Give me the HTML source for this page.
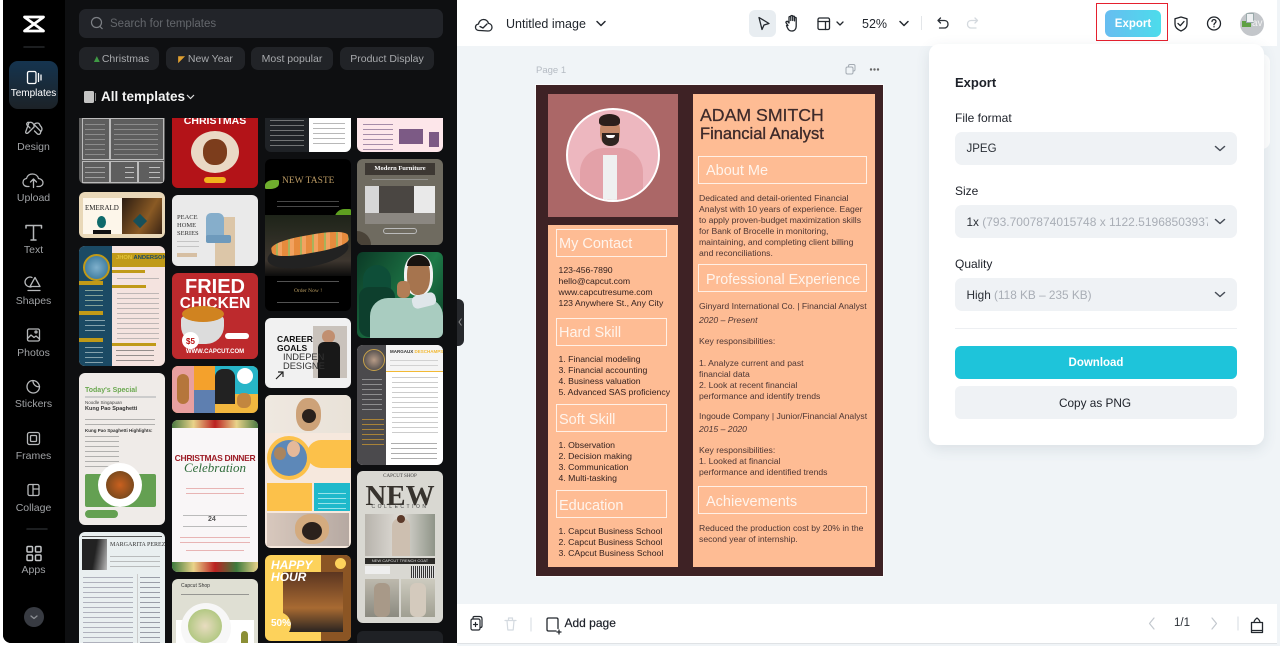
<!DOCTYPE html>
<html><head><meta charset="utf-8"><style>
html,body{margin:0;padding:0;width:1280px;height:646px;overflow:hidden;background:#fff;font-family:"Liberation Sans",sans-serif}
div,span,svg{position:absolute;display:block}
.t{white-space:nowrap;line-height:14px}
span.i{position:static;display:inline}
.nav{left:2.500px;width:62px;text-align:center;color:#a0a2a5;font-size:10.5px;line-height:12px}
.chip{top:47px;height:23px;background:#212327;border-radius:7px;color:#a8aaad;font-size:10.5px;line-height:24px;text-align:center;white-space:nowrap}
.c{overflow:hidden;border-radius:6px}
.l{opacity:.6;background:repeating-linear-gradient(#0000 0 2px,var(--k,#999) 2px 3px,#0000 3px 5px)}
.r9{font-size:8.700px;line-height:11px;color:#33211f;white-space:nowrap}
.b9{font-size:8.650px;line-height:11px;color:#4d3634;white-space:nowrap}
.box{border:1.300px solid #fff0e6;box-sizing:border-box;height:28px}
.h{color:#fff4ec;font-size:14.5px;line-height:16px;white-space:nowrap}
.lab{left:955px;font-size:12px;line-height:14px;color:#1d2129;white-space:nowrap}
.dd{left:955px;width:282px;height:33px;background:#eff2f5;border-radius:7px;font-size:11.800px;line-height:33px;color:#2a2f36;overflow:hidden}
.g{color:#a9aeb6}
.cap{color:#fff;font-weight:bold;white-space:nowrap;text-align:center}
</style></head><body>

<!-- canvas background -->
<div style="left:457px;top:0;width:823px;height:646px;background:#f0f4f7"></div>
<div style="left:457px;top:0;width:820px;height:46px;background:#fff"></div>
<div style="left:457px;top:604px;width:820px;height:39px;background:#fff;border-bottom:1px solid #dfe2e5"></div>

<!-- sidebar + panel -->
<div style="left:3px;top:0;width:454px;height:643px;background:#0e0f11;border-radius:0 0 0 8px;overflow:hidden"></div>
<div style="left:3px;top:0;width:62px;height:643px;background:#000;border-radius:0 0 0 8px"></div>

<svg style="left:0;top:0" width="68" height="640" fill="none" stroke="#b6b8ba" stroke-width="1.3" stroke-linecap="round" stroke-linejoin="round">
<path d="M24.5 17H43.5M25 17.5L43 30.5M43 17.5L25 30.5M24.5 31H43.500" stroke="#fff" stroke-width="2.7"/>
<path d="M24 47H44M27 529H47" stroke="#26282b" stroke-width="1.5"/>
</svg>

<div style="left:9px;top:61px;width:49px;height:48px;border-radius:9px;background:linear-gradient(#15344f,#1c2227)"></div>
<svg style="left:0;top:0" width="68" height="640" fill="none" stroke="#b6b8ba" stroke-width="1.3" stroke-linecap="round" stroke-linejoin="round">
<rect x="27.500" y="71.500" width="8.500" height="12" rx="1.500" stroke="#fff"/><path d="M38.500 73.500V81.500M41 75V80" stroke="#fff"/>
<!-- design -->
<path d="M29 122.500c3-1 5.500 1.500 5 4.500l-5.500 5.500c-1.800 1.800-3.500.5-2.500-1.500zM39 123.500c-2 -1-3.500-.5-5 1l7 7c1.500-2 1-4-.5-5.500zM30 128l-3-3c-1-2 1-3 2-2.500M34.500 131l3 3c2 1 3.500-.5 3-2.500"/>
<!-- upload -->
<path d="M29 186.500h-1.500c-3 0-4.500-2-4.500-4 0-2.300 1.500-3.800 3.500-4 .8-3 3-4.500 6-4.500s5.300 1.800 6 4.500c2.500.2 4.500 2 4.500 4.200 0 2-1.500 3.800-4 3.800H37M33.500 187.500V179.500M30.500 182l3-3 3 3"/>
<!-- text -->
<path d="M26 228v-2.500H41.500V228M33.500 225.500V240M31 240h5" stroke-width="1.500"/>
<!-- shapes -->
<path d="M31 287c-4 0-6-2.500-6-5s2.500-5 5-5c.8 0 1.500.2 2 .5M35 277.500l5 9h-10zM28 290.500h12" />
<!-- photos -->
<rect x="27.500" y="329" width="12" height="12" rx="1.500"/><path d="M27.500 338.500l3.500-3.500 3 2.500 2-1.500 3.500 3"/><circle cx="36" cy="332" r="1"/>
<!-- stickers -->
<path d="M33 380.500c-3.500 0-6 2.800-6 6.200s2.800 6.300 6.300 6.300 6.200-2.800 6.200-6.300c-3.500.5-6.800-2.500-6.500-6.200zM33 380.500c3 0 6 2.500 6.500 6"/>
<!-- frames -->
<rect x="27.500" y="432.500" width="12" height="12" rx="2"/><rect x="30.500" y="435.500" width="6" height="6" rx="1"/>
<!-- collage -->
<rect x="28" y="484.500" width="11" height="11" rx="1.500"/><path d="M33 484.500v11M33 489h6"/>
<!-- apps -->
<g stroke="#c4c6c8" stroke-width="1.500"><rect x="27" y="546.500" width="5.500" height="5.500" rx="1"/><rect x="35.500" y="546.500" width="5.500" height="5.500" rx="1"/><rect x="27" y="555" width="5.500" height="5.500" rx="1"/><rect x="35.500" y="555" width="5.500" height="5.500" rx="1"/></g>
<circle cx="34" cy="617" r="10" fill="#383b42" stroke="none"/><path d="M31 616l3 2.500 3-2.500" stroke="#8d9095"/>
</svg>

<div class="nav" style="top:88px;color:#fff;font-size:10px">Templates</div>
<div class="nav" style="top:141px">Design</div>
<div class="nav" style="top:192px">Upload</div>
<div class="nav" style="top:244px">Text</div>
<div class="nav" style="top:295px">Shapes</div>
<div class="nav" style="top:347px">Photos</div>
<div class="nav" style="top:398px">Stickers</div>
<div class="nav" style="top:450px">Frames</div>
<div class="nav" style="top:502px">Collage</div>
<div class="nav" style="top:564px">Apps</div>

<!-- search -->
<div style="left:79px;top:9px;width:364px;height:29px;background:#222429;border-radius:7px"></div>
<svg style="left:90px;top:15px" width="16" height="16" fill="none" stroke="#7d8085" stroke-width="1.200"><circle cx="6.500" cy="7.500" r="5"/><path d="M10 11.500l2.500 2.500"/></svg>
<div class="t" style="left:110px;top:17px;font-size:11.5px;color:#64676c">Search for templates</div>
<div class="chip" style="left:79px;width:80px;padding-left:3px;box-sizing:border-box"><span class="i" style="color:#3f9a44;font-size:10px">▲</span>Christmas</div>
<div class="chip" style="left:166px;width:79px;box-sizing:border-box"><span class="i" style="color:#e0a030;font-size:9px">◤</span> New Year</div>
<div class="chip" style="left:251px;width:82px">Most popular</div>
<div class="chip" style="left:340px;width:94px">Product Display</div>
<div style="left:84px;top:91px;width:10px;height:12px;background:#c4c4c4;border-radius:1.500px"></div>
<div style="left:94.500px;top:93px;width:1.500px;height:8px;background:#888"></div>
<div class="t" style="left:101px;top:89px;font-size:13.500px;line-height:16px;font-weight:bold;color:#f4f4f4">All templates</div>
<svg style="left:186px;top:93px" width="10" height="8" fill="none" stroke="#ddd" stroke-width="1.200"><path d="M1 2l3.500 3.500L8 2"/></svg>

<!-- template grid -->
<div style="left:79px;top:118px;width:366px;height:525px;overflow:hidden">
<!-- col1 -->
<div class="c" style="left:0;top:-8px;width:86px;height:74px;background:#5e5e5e">
  <div style="left:3px;top:8px;width:26px;height:40px;border:1px solid #bbb"></div><div style="left:31px;top:8px;width:52px;height:40px;border:1px solid #bbb"></div>
  <div class="l" style="left:6px;top:12px;width:20px;height:33px;--k:#aaa"></div><div class="l" style="left:35px;top:12px;width:44px;height:33px;--k:#aaa"></div>
  <div style="left:3px;top:51px;width:26px;height:20px;border:1px solid #bbb"></div><div style="left:31px;top:51px;width:26px;height:20px;border:1px solid #bbb"></div><div style="left:59px;top:51px;width:24px;height:20px;border:1px solid #bbb"></div>
  <div class="l" style="left:6px;top:55px;width:20px;height:14px;--k:#ccc"></div><div class="l" style="left:46px;top:55px;width:9px;height:14px;--k:#fff"></div><div class="l" style="left:70px;top:55px;width:11px;height:14px;--k:#fff"></div>
</div>
<div class="c" style="left:0;top:74px;width:86px;height:46px;background:#e9d8b8">
  <div style="left:4px;top:6px;width:40px;height:36px;background:#fdf6ea"></div>
  <div style="left:43px;top:6px;width:40px;height:36px;background:linear-gradient(120deg,#2b1c12,#8a5a24 60%,#3a2414)"></div>
  <div class="t" style="left:6px;top:12px;font-family:'Liberation Serif',serif;font-size:7px;line-height:9px;color:#222">EMERALD</div>
  <div style="left:18px;top:24px;width:9px;height:12px;border-radius:50%;background:#0f6a6b"></div>
  <div style="left:14px;top:38px;width:18px;height:4px;background:#111"></div>
  <div style="left:56px;top:24px;width:10px;height:10px;background:#16505a;transform:rotate(45deg)"></div>
</div>
<div class="c" style="left:0;top:128px;width:86px;height:120px;background:#f4e3df">
  <div style="left:0;top:0;width:33px;height:120px;background:#1b4a64"></div>
  <div style="left:33px;top:7px;width:53px;height:14px;background:#c09a18"></div>
  <div class="t" style="left:37px;top:8px;font-size:5.800px;line-height:9px;font-weight:bold;color:#1b4a64"><span class="i" style="color:#e3c43a">JHON</span> ANDERSON</div>
  <div style="left:4px;top:8px;width:23px;height:23px;border-radius:50%;border:2px solid #c09a18;background:radial-gradient(#7fb0cc,#2b6d92)"></div>
  <div style="left:0;top:35px;width:24px;height:4px;background:#c09a18"></div><div style="left:33px;top:24px;width:33px;height:3px;background:#c09a18"></div><div style="left:33px;top:39px;width:34px;height:3px;background:#c09a18"></div>
  <div style="left:0;top:65px;width:24px;height:4px;background:#c09a18"></div><div style="left:0;top:92px;width:24px;height:4px;background:#c09a18"></div><div style="left:33px;top:97px;width:44px;height:3px;background:#c09a18"></div>
  <div class="l" style="left:38px;top:30px;width:42px;height:7px;--k:#999"></div><div class="l" style="left:38px;top:45px;width:42px;height:50px;--k:#999"></div><div class="l" style="left:37px;top:102px;width:38px;height:14px;--k:#555"></div>
  <div class="l" style="left:6px;top:42px;width:18px;height:18px;--k:#cdb"></div><div class="l" style="left:6px;top:72px;width:20px;height:16px;--k:#cdd"></div><div class="l" style="left:6px;top:99px;width:18px;height:18px;--k:#cdd"></div>
</div>
<div class="c" style="left:0;top:255px;width:86px;height:152px;background:#efebe8">
  <div class="t" style="left:6px;top:13px;font-size:7px;line-height:10px;font-weight:bold;color:#6aa84f">Today's Special</div>
  <div style="left:6px;top:23px;width:71px;height:2px;background:#ccc"></div>
  <div class="t" style="left:6px;top:27px;font-size:4.500px;line-height:6px;color:#444">Noodle Singapuan</div>
  <div class="t" style="left:6px;top:33px;font-size:5.500px;line-height:7px;font-weight:bold;color:#333">Kung Pao Spaghetti</div>
  <div class="l" style="left:6px;top:44px;width:70px;height:10px;--k:#888"></div>
  <div class="t" style="left:6px;top:55px;font-size:4.500px;line-height:6px;font-weight:bold;color:#333">Kung Pao Spaghetti Highlights:</div>
  <div class="l" style="left:6px;top:61px;width:34px;height:33px;--k:#888"></div>
  <div style="left:6px;top:101px;width:71px;height:33px;background:#64a052;border-radius:2px"></div>
  <div style="left:19px;top:90px;width:44px;height:44px;border-radius:50%;background:#fff"></div>
  <div style="left:27px;top:98px;width:28px;height:28px;border-radius:50%;background:radial-gradient(#c9601f,#7d4a1d 70%,#5d7a22)"></div>
  <div style="left:6px;top:137px;width:33px;height:8px;border-radius:4px;background:#64a052"></div>
</div>
<div class="c" style="left:0;top:414px;width:86px;height:120px;background:#e9eff0">
  <div style="left:3px;top:4px;width:80px;height:1px;background:#555"></div>
  <div style="left:3px;top:7px;width:25px;height:31px;background:linear-gradient(100deg,#222 50%,#bbb)"></div>
  <div class="t" style="left:31px;top:9px;font-family:'Liberation Serif',serif;font-size:6px;line-height:8px;color:#333">MARGARITA PEREZ</div>
  <div class="l" style="left:31px;top:22px;width:50px;height:14px;--k:#999"></div>
  <div style="left:58px;top:42px;width:1px;height:70px;background:#ccc"></div>
  <div class="l" style="left:4px;top:43px;width:50px;height:70px;--k:#889"></div><div class="l" style="left:61px;top:43px;width:20px;height:70px;--k:#667"></div>
</div>
<!-- col2 -->
<div class="c" style="left:93px;top:-12px;width:86px;height:82px;background:#b31318">
  <div class="cap" style="left:0;top:9px;width:86px;font-size:10.500px;line-height:12px">CHRISTMAS</div>
  <div style="left:19px;top:25px;width:48px;height:42px;border-radius:50%;background:#ead9c5"></div>
  <div style="left:31px;top:33px;width:24px;height:26px;border-radius:45%;background:#7c3d1c"></div>
  <div style="left:32px;top:71px;width:22px;height:6px;border-radius:3px;background:#f2b21c"></div>
</div>
<div class="c" style="left:93px;top:77px;width:86px;height:71px;background:#eaeaea">
  <div class="t" style="left:5px;top:19px;font-family:'Liberation Serif',serif;font-size:6.500px;line-height:8px;color:#333">PEACE<br>HOME<br>SERIES</div>
  <div style="left:43px;top:22px;width:20px;height:49px;background:#dcc6a8"></div>
  <div style="left:34px;top:18px;width:18px;height:29px;border-radius:5px 6px 2px 2px;background:#86aecb"></div>
  <div style="left:34px;top:40px;width:25px;height:8px;background:#6e9abc;border-radius:2px"></div>
  <div class="l" style="left:5px;top:44px;width:22px;height:10px;--k:#aaa"></div><div style="left:5px;top:58px;width:20px;height:4px;background:#d6bfa3"></div>
</div>
<div class="c" style="left:93px;top:155px;width:86px;height:86px;background:#bd2a2d">
  <div class="cap" style="left:0;top:4px;width:86px;font-size:20px;line-height:21px">FRIED</div>
  <div class="cap" style="left:0;top:22px;width:86px;font-size:15.500px;line-height:17px">CHICKEN</div>
  <div style="left:9px;top:43px;width:43px;height:28px;border-radius:4px 4px 18px 18px;background:#dcdcdc"></div>
  <div style="left:10px;top:33px;width:42px;height:16px;border-radius:50%;background:#d08320"></div>
  <div style="left:10px;top:59px;width:17px;height:17px;border-radius:50%;background:#fff;color:#b11;font-size:8px;font-weight:bold;line-height:19px;text-align:center">$5</div>
  <div style="left:53px;top:60px;width:24px;height:6px;border-radius:3px;background:#fff"></div>
  <div class="cap" style="left:0;top:75px;width:86px;font-size:6px;line-height:8px">WWW.CAPCUT.COM</div>
</div>
<div class="c" style="left:93px;top:248px;width:86px;height:47px;background:#f2b73f">
  <div style="left:0;top:0;width:22px;height:47px;background:#e8a0a0"></div>
  <div style="left:22px;top:0;width:21px;height:24px;background:#f4a12c"></div>
  <div style="left:43px;top:0;width:43px;height:28px;background:#27b5c8"></div>
  <div style="left:43px;top:3px;width:20px;height:35px;background:#222;border-radius:8px 8px 0 0"></div>
  <div style="left:22px;top:24px;width:21px;height:23px;background:#5e7fb0"></div>
  <div style="left:5px;top:8px;width:12px;height:30px;background:#b5763c;border-radius:6px"></div>
  <div style="left:65px;top:27px;width:14px;height:15px;background:#c2863f;border-radius:6px"></div>
  <div style="left:65px;top:2px;width:16px;height:16px;border-radius:50%;background:#fff"></div>
</div>
<div class="c" style="left:93px;top:302px;width:86px;height:152px;background:#f9f6f7">
  <div style="left:0;top:0;width:86px;height:8px;background:linear-gradient(90deg,#4c7a42,#e9d38a,#b22,#e9d38a,#4c7a42)"></div>
  <div class="t" style="left:0;top:33px;width:86px;text-align:center;font-size:8.500px;line-height:10px;font-weight:bold;color:#9d1c26;letter-spacing:-.3px">CHRISTMAS DINNER</div>
  <div class="t" style="left:0;top:41px;width:86px;text-align:center;font-family:'Liberation Serif',serif;font-style:italic;font-size:13px;line-height:14px;color:#2f6b3a">Celebration</div>
  <div class="l" style="left:14px;top:66px;width:58px;height:11px;--k:#d88"></div>
  <div style="left:11px;top:95px;width:64px;height:10px;border-top:1px solid #bbb;border-bottom:1px solid #bbb"></div>
  <div class="t" style="left:36px;top:95px;font-size:7px;line-height:10px;font-weight:bold;color:#555">24</div>
  <div class="l" style="left:8px;top:115px;width:70px;height:8px;--k:#d88"></div><div class="l" style="left:14px;top:128px;width:58px;height:4px;--k:#d88"></div>
  <div style="left:0;top:142px;width:86px;height:10px;background:linear-gradient(90deg,#3d7a3d,#e9d38a,#b22,#3d7a3d,#e9d38a)"></div>
</div>
<div class="c" style="left:93px;top:461px;width:86px;height:70px;background:#dfdfd3">
  <div class="t" style="left:9px;top:4px;font-size:5px;line-height:7px;color:#333">Capcut Shop</div>
  <div style="left:9px;top:13px;width:68px;height:5px;--k:#666" class="l"></div>
  <div style="left:4px;top:41px;width:78px;height:30px;background:#fff"></div>
  <div style="left:9px;top:24px;width:50px;height:50px;border-radius:50%;background:#f7f7f7"></div>
  <div style="left:16px;top:30px;width:34px;height:34px;border-radius:50%;background:radial-gradient(#e8dcc0,#9dc06a)"></div>
  <div style="left:69px;top:52px;width:7px;height:20px;border-radius:4px;background:#8b8f35"></div>
</div>
<!-- col3 -->
<div class="c" style="left:186px;top:-10px;width:86px;height:44px;background:#1f2226">
  <div style="left:44px;top:0;width:42px;height:44px;background:#fff"></div>
  <div class="l" style="left:5px;top:10px;width:34px;height:30px;--k:#aaa"></div><div class="l" style="left:48px;top:13px;width:32px;height:24px;--k:#888"></div>
</div>
<div class="c" style="left:186px;top:41px;width:86px;height:152px;background:#000">
  <div class="t" style="left:17px;top:17px;font-family:'Liberation Serif',serif;font-size:9.500px;line-height:11px;color:#bb9a63">NEW TASTE</div>
  <div class="l" style="left:12px;top:40px;width:62px;height:10px;--k:#777"></div>
  <div style="left:0;top:21px;width:14px;height:9px;border-radius:60% 10%;background:#6fae2e"></div>
  <div style="left:70px;top:50px;width:16px;height:14px;border-radius:60% 10%;background:#5ea020"></div>
  <div style="left:0;top:56px;width:86px;height:61px;background:linear-gradient(#1e2419,#3d362f 75%,#0c0c0c)"></div>
  <div style="left:2px;top:80px;width:82px;height:28px;border-radius:50%;background:#222;transform:rotate(-10deg)"></div>
  <div style="left:6px;top:76px;width:78px;height:18px;border-radius:40%;background:repeating-linear-gradient(100deg,#e68b3d 0 6px,#a8b35b 6px 8px,#f2a260 8px 12px);transform:rotate(-10deg)"></div>
  <div class="l" style="left:12px;top:120px;width:62px;height:6px;--k:#888"></div>
  <div class="t" style="left:0;width:86px;text-align:center;top:129px;font-family:'Liberation Serif',serif;font-size:5.500px;line-height:7px;color:#b89b60">Order Now !</div>
  <div class="l" style="left:12px;top:141px;width:62px;height:4px;--k:#888"></div>
</div>
<div class="c" style="left:186px;top:200px;width:86px;height:70px;background:#f1f1f1">
  <div style="left:48px;top:8px;width:34px;height:52px;background:#c9c2bb"></div>
  <div style="left:57px;top:12px;width:13px;height:13px;border-radius:50%;background:#c18f70"></div>
  <div style="left:53px;top:24px;width:22px;height:36px;background:#181818;border-radius:6px 6px 0 0"></div>
  <div class="t" style="left:12px;top:17px;font-size:8.500px;line-height:9px;font-weight:bold;color:#111">CAREER<br>GOALS</div>
  <div class="t" style="left:18px;top:35px;font-size:9.300px;line-height:9px;color:#333">INDEPEN<br>DESIGNE</div>
  <svg style="left:10px;top:52px" width="10" height="10" fill="none" stroke="#222" stroke-width="1.200"><path d="M1 9L8 2M3 2h5v5"/></svg>
</div>
<div class="c" style="left:186px;top:277px;width:86px;height:153px;background:#f6e8dd">
  <div style="left:0;top:0;width:86px;height:38px;background:linear-gradient(90deg,#efe8e0,#e9e2d8)"></div>
  <div style="left:31px;top:3px;width:25px;height:33px;border-radius:45%;background:#cda278"></div><div style="left:37px;top:14px;width:14px;height:14px;border-radius:50%;background:#2a211c"></div>
  <div style="left:2px;top:41px;width:44px;height:44px;border-radius:50%;background:#fcc14a"></div>
  <div style="left:6px;top:45px;width:36px;height:36px;border-radius:50%;background:#5d88b8"></div>
  <div style="left:22px;top:46px;width:13px;height:16px;border-radius:50%;background:#e5b99a"></div>
  <div style="left:9px;top:52px;width:12px;height:13px;border-radius:50%;background:#aa855f"></div>
  <div style="left:42px;top:45px;width:44px;height:28px;border-radius:14px 0 0 14px;background:#fcc14a"></div>
  <div style="left:2px;top:88px;width:45px;height:28px;background:#fcc14a"></div>
  <div style="left:49px;top:88px;width:36px;height:28px;background:#1fb9cb"></div>
  <div class="l" style="left:53px;top:96px;width:28px;height:18px;--k:#e8ffff"></div>
  <div style="left:2px;top:118px;width:82px;height:33px;background:linear-gradient(90deg,#d8c8bd,#b6a9a2)"></div>
  <div style="left:30px;top:119px;width:34px;height:30px;border-radius:45%;background:#d4ab7f"></div><div style="left:37px;top:127px;width:20px;height:18px;border-radius:50%;background:#2b211c"></div>
</div>
<div class="c" style="left:186px;top:437px;width:86px;height:86px;background:#fdd25b">
  <div style="left:56px;top:0;width:30px;height:86px;background:#8b5524"></div>
  <div style="left:18px;top:17px;width:60px;height:60px;background:linear-gradient(#5b3520,#a86a32 60%,#2a2421)"></div>
  <div style="left:0;top:57px;width:26px;height:26px;border-radius:50%;background:#fdd25b"></div>
  <div class="cap" style="left:6px;top:4px;font-size:12px;line-height:12px;font-style:italic;text-align:left">HAPPY<br>HOUR</div>
  <div class="cap" style="left:6px;top:64px;font-size:10px;line-height:10px;text-align:left">50%</div>
  <div style="left:70px;top:3px;width:11px;height:11px;border-radius:50%;background:#fdd25b"></div>
</div>
<!-- col4 -->
<div class="c" style="left:278px;top:-10px;width:86px;height:44px;background:#fde6ea">
  <div class="l" style="left:6px;top:14px;width:30px;height:28px;--k:#6b4f7c"></div>
  <div style="left:42px;top:21px;width:24px;height:15px;background:#7c5a85"></div><div style="left:72px;top:24px;width:10px;height:15px;background:#7c5a85"></div>
</div>
<div class="c" style="left:278px;top:41px;width:86px;height:86px;background:#6f6b60">
  <div style="left:8px;top:4px;width:70px;height:12px;background:#3d3833"></div>
  <div class="cap" style="left:0;top:4px;width:86px;font-size:6.500px;line-height:12px;font-family:'Liberation Serif',serif">Modern Furniture</div>
  <div class="l" style="left:15px;top:18px;width:56px;height:6px;--k:#aaa"></div>
  <div style="left:8px;top:27px;width:70px;height:33px;background:linear-gradient(90deg,#d7d7d7 20%,#4a4642 20% 70%,#e9e9e9 70%)"></div>
  <div style="left:8px;top:54px;width:70px;height:11px;background:#8b8781"></div>
  <div style="left:26px;top:69px;width:34px;height:6px;border-radius:3px;border:1px solid #bbb;box-sizing:border-box"></div>
  <div style="left:0;top:72px;width:14px;height:14px;border-radius:0 14px 0 0;background:#4a4338"></div>
</div>
<div class="c" style="left:278px;top:134px;width:86px;height:86px;background:linear-gradient(120deg,#0b3a26,#1f7a48 60%,#0a3c25)">
  <div style="left:6px;top:13px;width:28px;height:30px;background:#0e4e38;border-radius:14px 14px 0 0"></div>
  <div style="left:2px;top:35px;width:36px;height:50px;background:#0d3f2d;border-radius:10px"></div>
  <div style="left:47px;top:2px;width:29px;height:42px;border-radius:45%;background:#f2f2f2"></div>
  <div style="left:50px;top:5px;width:23px;height:38px;border-radius:45%;background:#a6744e"></div>
  <div style="left:50px;top:3px;width:23px;height:11px;border-radius:12px 12px 0 0;background:#191310"></div>
  <div style="left:13px;top:46px;width:73px;height:40px;border-radius:18px 18px 0 0;background:#a9ccc0"></div>
  <div style="left:55px;top:42px;width:24px;height:13px;border-radius:5px;background:#dfe6ea;transform:rotate(-14deg)"></div>
  <div style="left:40px;top:29px;width:13px;height:17px;border-radius:5px;background:#b27d55"></div>
</div>
<div class="c" style="left:278px;top:227px;width:86px;height:120px;background:#fff">
  <div style="left:0;top:0;width:29px;height:120px;background:#4b4a4d"></div>
  <div style="left:29px;top:0;width:57px;height:26px;background:#f4f4f4"></div>
  <div style="left:29px;top:26px;width:57px;height:1px;background:#f2b934"></div>
  <div style="left:6px;top:4px;width:20px;height:20px;border-radius:50%;border:1px solid #c8a24a;background:radial-gradient(#b89c87,#33363b)"></div>
  <div class="t" style="left:33px;top:3px;font-size:4.500px;line-height:7px;font-weight:bold;color:#333">MARGAUX <span class="i" style="color:#f2b934">DESCHAMPS</span></div>
  <div class="l" style="left:33px;top:13px;width:48px;height:8px;--k:#bbb"></div>
  <div class="l" style="left:35px;top:30px;width:46px;height:60px;--k:#aaa"></div><div class="l" style="left:5px;top:32px;width:20px;height:34px;--k:#bbb"></div>
  <div class="l" style="left:5px;top:72px;width:22px;height:30px;--k:#e8a92a"></div><div class="l" style="left:34px;top:96px;width:46px;height:18px;--k:#777"></div>
</div>
<div class="c" style="left:278px;top:353px;width:86px;height:152px;background:#d9d8d2">
  <div class="t" style="left:0;top:2px;width:86px;text-align:center;font-family:'Liberation Serif',serif;font-size:5px;line-height:7px;color:#444">CAPCUT SHOP</div>
  <div class="t" style="left:0;top:10px;width:86px;text-align:center;font-family:'Liberation Serif',serif;font-size:29px;line-height:30px;font-weight:bold;color:#37332e;letter-spacing:0">NEW</div>
  <div class="t" style="left:0;top:33px;width:86px;text-align:center;font-size:5px;line-height:7px;color:#444;letter-spacing:2.500px">COLLECTION</div>
  <div style="left:8px;top:43px;width:70px;height:42px;background:linear-gradient(90deg,#b7b3ac,#dfdcd6 50%,#8f9488)"></div>
  <div style="left:35px;top:47px;width:18px;height:38px;border-radius:8px 8px 0 0;background:#cdbfb0"></div><div style="left:40px;top:44px;width:8px;height:8px;border-radius:50%;background:#5c3a2a"></div>
  <div style="left:8px;top:87px;width:70px;height:6px;background:#2c2b28;color:#ddd;font-size:4px;line-height:6px;text-align:center">NEW CAPCUT TRENCH COAT</div>
  <div style="left:8px;top:95px;width:25px;height:8px;background:#eee"></div>
  <div style="left:54px;top:95px;width:24px;height:12px;background:repeating-linear-gradient(90deg,#333 0 1px,#e0e0e0 1px 2px)"></div>
  <div style="left:8px;top:108px;width:34px;height:38px;background:linear-gradient(#bdb9ad,#8b8a80)"></div>
  <div style="left:44px;top:108px;width:34px;height:38px;background:linear-gradient(#cdcbbf,#a09f92)"></div>
  <div style="left:17px;top:112px;width:16px;height:34px;border-radius:6px;background:#a89988"></div><div style="left:53px;top:112px;width:16px;height:34px;border-radius:6px;background:#d4cabd"></div>
</div>
<div class="c" style="left:278px;top:513px;width:86px;height:30px;background:#1f2125"></div>
</div>

<!-- collapse handle -->
<div style="left:457px;top:299px;width:7px;height:47px;background:#26282c;border-radius:0 6px 6px 0"></div>
<svg style="left:457px;top:317px" width="7" height="10" fill="none" stroke="#888" stroke-width="1"><path d="M4.500 1.500L2 5l2.500 3.500"/></svg>

<!-- top bar -->
<svg style="left:460px;top:0" width="480" height="46" fill="none" stroke="#24292f" stroke-width="1.300" stroke-linecap="round" stroke-linejoin="round">
<path d="M20 30.500h-1c-2.500 0-3.500-1.700-3.500-3.200 0-1.800 1.200-3 3-3.300.5-2.600 2.500-4.500 5-4.500s4.300 1.600 5 3.900c2 .3 3.500 1.800 3.500 3.800 0 2.200-1.600 3.800-4 3.800z"/>
<path d="M20 26.500l3 1.500 4-4"/>
<path d="M137 21.500l4 4 4-4" stroke-width="1.500"/>
</svg>
<div class="t" style="left:506px;top:17px;font-size:12.500px;color:#22272e">Untitled image</div>
<div style="left:749px;top:10px;width:26.500px;height:26.500px;border-radius:6px;background:#e8edf1"></div>
<svg style="left:740px;top:0" width="180" height="46" fill="none" stroke="#23282e" stroke-width="1.300" stroke-linecap="round" stroke-linejoin="round">
<path d="M19 17.500l10 6-5 1.500-2 4.500z"/>
<path d="M46 25.500l-1.800-2.500c-.8-1.200.8-2.300 1.800-1.200l1 1.200v-5.500c0-1.300 1.800-1.300 1.800 0v3-4c0-1.300 1.900-1.300 1.900 0v4-3.400c0-1.300 1.800-1.300 1.800 0v3.800-2.500c0-1.300 1.700-1.300 1.700 0V26c0 3-1.800 5-4.600 5-2.500 0-3.600-1.500-5.100-5.500z" transform="translate(2 0)"/>
<rect x="78" y="18" width="11.500" height="11.500" rx="1.500"/><path d="M78 21.500h11.500M85.500 21.500v8"/>
<path d="M97 22l3 3 3-3"/>
<path d="M160 21.500l4 4 4-4" stroke-width="1.500"/>
</svg>
<div class="t" style="left:862px;top:17px;font-size:12.500px;color:#22272e">52%</div>
<div style="left:921px;top:16px;width:1px;height:14px;background:#e3e6e9"></div>
<svg style="left:930px;top:12px" width="55" height="26" fill="none" stroke="#2a2f36" stroke-width="1.300" stroke-linecap="round" stroke-linejoin="round">
<path d="M8 8.500h6.500c2.200 0 3.500 1.700 3.500 3.700s-1.300 3.800-3.500 3.800H9.500M10.500 6L8 8.500l2.500 2.500"/>
<path d="M47.500 8.500H41c-2.200 0-3.500 1.700-3.500 3.700s1.300 3.800 3.500 3.800h5M45 6l2.500 2.500L45 11" stroke="#d4d9de"/>
</svg>

<!-- export btn -->
<div style="left:1096px;top:3px;width:72px;height:38px;border:1.300px solid #e5202e;box-sizing:border-box"></div>
<div style="left:1105px;top:10px;width:56px;height:27px;border-radius:6px;background:linear-gradient(90deg,#67bdf0,#4cdcec);color:#fff;font-size:11.500px;font-weight:bold;line-height:28px;text-align:center">Export</div>
<svg style="left:1170px;top:11px" width="100" height="26" fill="none" stroke="#1f242a" stroke-width="1.300" stroke-linecap="round" stroke-linejoin="round">
<path d="M11 6l6 1.800v5.200c0 3.500-2.800 5.700-6 7-3.200-1.300-6-3.500-6-7V7.800z"/><path d="M8 12.500l2.300 2.200L14 10.500"/>
<circle cx="44" cy="12.500" r="6.500"/><path d="M42 10.500c0-2.500 4-2.500 4 0 0 1.500-2 1.500-2 3.200M44 15.700v.2"/>
</svg>
<div style="left:1240px;top:12px;width:24px;height:24px;border-radius:50%;background:#c3c6ca;overflow:hidden">
  <div style="left:2px;top:9px;width:9px;height:6px;background:#5fa044"></div><div style="left:6px;top:1px;width:6px;height:8px;background:#eef0f2;border:1px solid #9aa"></div>
  <div class="t" style="left:12px;top:5px;font-size:10px;color:#f3f3f3">av</div>
</div>

<!-- page header -->
<div class="t" style="left:536px;top:63.500px;font-size:9.500px;color:#b5bbc3">Page 1</div>
<svg style="left:845px;top:63px" width="40" height="14" fill="none" stroke="#a4abb3" stroke-width="1"><rect x="1" y="4" width="7" height="7" rx="1.500"/><path d="M3.500 4V3c0-1 .5-1.500 1.500-1.500h3.500c1 0 1.500.5 1.500 1.500v3.500c0 1-.5 1.500-1.500 1.500"/><circle cx="26" cy="6.500" r=".7" fill="#666" stroke="#666"/><circle cx="29.500" cy="6.500" r=".7" fill="#666" stroke="#666"/><circle cx="33" cy="6.500" r=".7" fill="#666" stroke="#666"/></svg>

<!-- resume -->
<div style="left:535.500px;top:85px;width:347.500px;height:491px;background:#3e2225;box-shadow:0 0 0 1px #fafbfc"></div>
<div style="left:548px;top:94px;width:130px;height:123px;background:#ab6767"></div>
<div style="left:566px;top:108px;width:94px;height:94px;border-radius:50%;box-sizing:border-box;border:2px solid #fff;background:#edb7bf;overflow:hidden">
  <div style="left:12px;top:38px;width:63px;height:72px;border-radius:24px 24px 0 0;background:#e3a1a8"></div>
  <div style="left:35px;top:45px;width:14px;height:50px;background:#eff0f0"></div>
  <div style="left:32px;top:7px;width:20px;height:29px;border-radius:45%;background:#c38868"></div>
  <div style="left:31px;top:4px;width:21px;height:12px;border-radius:50% 50% 30% 30%;background:#2b1f1b"></div>
  <div style="left:34px;top:23px;width:17px;height:13px;border-radius:0 0 50% 50%;background:#2f2420"></div>
  <div style="left:38px;top:25px;width:9px;height:3px;background:#fff;border-radius:0 0 3px 3px"></div>
</div>
<div style="left:548px;top:225px;width:130px;height:342px;background:#febc94"></div>
<div style="left:692.500px;top:94px;width:182.500px;height:473px;background:#febc94"></div>

<div class="box" style="left:556px;top:229px;width:111px"></div><div class="h" style="left:559px;top:235.500px">My Contact</div>
<div class="r9" style="left:558.500px;top:265px">123-456-7890<br>hello@capcut.com<br>www.capcutresume.com<br>123 Anywhere St., Any City</div>
<div class="box" style="left:556px;top:318px;width:111px"></div><div class="h" style="left:559px;top:325px">Hard Skill</div>
<div class="r9" style="left:558.500px;top:353.500px">1. Financial modeling<br>3. Financial accounting<br>4. Business valuation<br>5. Advanced SAS proficiency</div>
<div class="box" style="left:556px;top:404px;width:111px"></div><div class="h" style="left:559px;top:412px">Soft Skill</div>
<div class="r9" style="left:558.500px;top:440px">1. Observation<br>2. Decision making<br>3. Communication<br>4. Multi-tasking</div>
<div class="box" style="left:556px;top:490px;width:111px"></div><div class="h" style="left:559px;top:498px">Education</div>
<div class="r9" style="left:558.500px;top:526px">1. Capcut Business School<br>2. Capcut Business School<br>3. CApcut Business School</div>

<div class="t" style="left:700px;top:104px;font-size:17.700px;line-height:22px;color:#3e2a2a;-webkit-text-stroke:.25px #3e2a2a">ADAM SMITCH</div>
<div class="t" style="left:700px;top:125px;font-size:16.500px;line-height:19px;color:#3e2a2a;-webkit-text-stroke:.35px #3e2a2a">Financial Analyst</div>
<div class="box" style="left:698px;top:156px;width:169px"></div><div class="h" style="left:706px;top:163px">About Me</div>
<div class="b9" style="left:699px;top:192.500px">Dedicated and detail-oriented Financial<br>Analyst with 10 years of experience. Eager<br>to apply proven-budget maximization skills<br>for Bank of Brocelle in monitoring,<br>maintaining, and completing client billing<br>and reconciliations.</div>
<div class="box" style="left:698px;top:264px;width:169px"></div><div class="h" style="left:706px;top:272px;font-size:14.300px">Professional Experience</div>
<div class="b9" style="left:699px;top:301px">Ginyard International Co. | Financial Analyst</div>
<div class="b9" style="left:699px;top:314.500px;font-style:italic">2020 – Present</div>
<div class="b9" style="left:699px;top:335.500px">Key responsibilities:</div>
<div class="b9" style="left:699px;top:357.500px">1. Analyze current and past<br>financial data<br>2. Look at recent financial<br>performance and identify trends</div>
<div class="b9" style="left:699px;top:411px">Ingoude Company | Junior/Financial Analyst</div>
<div class="b9" style="left:699px;top:424px;font-style:italic">2015 – 2020</div>
<div class="b9" style="left:699px;top:445px">Key responsibilities:<br>1. Looked at financial<br>performance and identified trends</div>
<div class="box" style="left:698px;top:486px;width:169px"></div><div class="h" style="left:706px;top:493.500px">Achievements</div>
<div class="b9" style="left:699px;top:523px">Reduced the production cost by 20% in the<br>second year of internship.</div>

<!-- hidden panel behind -->
<div style="left:1240px;top:54px;width:30px;height:95px;background:#fff;border-radius:8px"></div>

<!-- export panel -->
<div style="left:929px;top:44px;width:335px;height:401px;background:#fff;border-radius:10px;box-shadow:0 4px 14px rgba(60,80,100,.12)"></div>
<div class="t" style="left:955px;top:75.500px;font-size:13px;font-weight:bold;color:#1d2129">Export</div>
<div class="lab" style="top:111px">File format</div>
<div class="dd" style="top:132px"><div class="t" style="left:11.500px;top:1px;line-height:33px;font-size:11.500px">JPEG</div></div>
<div class="lab" style="top:184px">Size</div>
<div class="dd" style="top:205px"><div class="t" style="left:11.500px;top:1px;line-height:33px;width:241px;overflow:hidden">1x <span class="i g" style="font-size:12px">(793.7007874015748 x 1122.51968503937</span></div></div>
<div class="lab" style="top:257px">Quality</div>
<div class="dd" style="top:278px"><div class="t" style="left:11.500px;top:1px;line-height:33px">High <span class="i g">(118 KB – 235 KB)</span></div></div>
<svg style="left:1210px;top:130px" width="20" height="180" fill="none" stroke="#474d57" stroke-width="1.500" stroke-linecap="round" stroke-linejoin="round"><path d="M5.500 16.500l4.500 4 4.500-4M5.500 89.500l4.500 4 4.500-4M5.500 162.500l4.500 4 4.500-4"/></svg>
<div style="left:955px;top:328px;width:282px;height:1px;background:#edeff2"></div>
<div style="left:955px;top:346px;width:282px;height:33px;border-radius:6px;background:#1ec4da;color:#fff;font-size:11.500px;font-weight:bold;line-height:34px;text-align:center">Download</div>
<div style="left:955px;top:386px;width:282px;height:33px;border-radius:6px;background:#eff2f5;color:#1d2129;font-size:11.800px;line-height:34px;text-align:center;text-indent:-2px">Copy as PNG</div>

<!-- bottom bar -->
<svg style="left:460px;top:604px" width="820" height="38" fill="none" stroke="#23282e" stroke-width="1.200" stroke-linecap="round" stroke-linejoin="round">
<rect x="11" y="15" width="9" height="11" rx="1.500"/><path d="M13 15v-1c0-1 .6-1.500 1.500-1.500h5c1.500 0 2.500 1 2.500 2.500v7c0 1-.5 1.500-1.500 1.500M15.500 18.500v4M13.500 20.500h4"/>
<path d="M45 16.500h11M47 16.500l.8 9.500h5.400l.8-9.500M48.500 16.500v-2.500h4v2.500" stroke="#d4dae0"/>
<path d="M71 14v13" stroke="#dde1e5"/>
<path d="M96 27h-7.500c-1 0-1.500-.5-1.500-1.500v-10c0-1 .5-1.500 1.500-1.500h8c1 0 1.500.5 1.500 1.500v9M99 26v4M97 28h4" stroke-width="1.300"/>
<path d="M694 14l-4.500 5.500 4.500 5.500M752 14l4.500 5.500-4.500 5.500" stroke="#c3c8ce"/>
<path d="M778 13v13" stroke="#dde1e5"/>
<path d="M791.500 18.500h11v10h-11zM794 18.500c0-2 1-3 3-4.500 2 1.500 3 2.500 3 4.500M791.500 26.500h11" stroke-width="1.300"/>
</svg>
<div class="t" style="left:564.500px;top:616px;font-size:12px;color:#1d2129;-webkit-text-stroke:.2px #1d2129">Add page</div>
<div class="t" style="left:1174px;top:616px;font-size:11.500px;color:#2a2f36">1/1</div>
</body></html>
